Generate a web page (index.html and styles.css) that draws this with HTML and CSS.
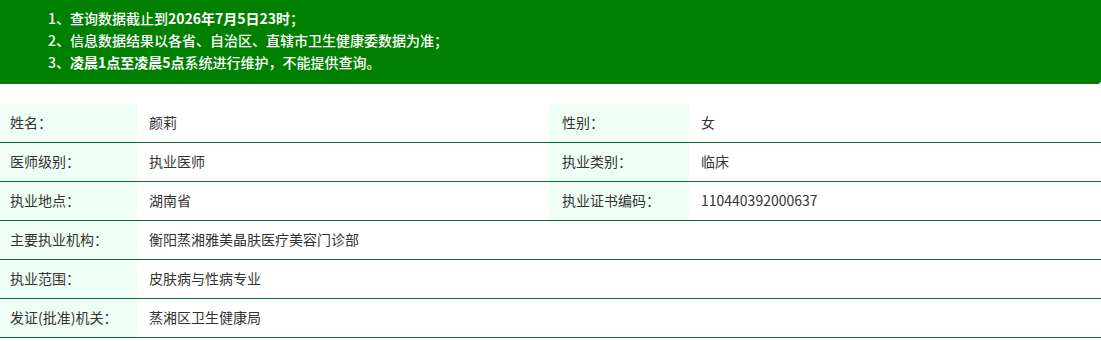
FILE: index.html
```html
<!DOCTYPE html>
<html lang="zh-CN">
<head>
<meta charset="utf-8">
<title>执业医师查询</title>
<link rel="stylesheet" href="styles.css">
</head>
<body>
<div class="notice">
  <p>1、查询数据截止到<b>2026年7月5日23时</b>；</p>
  <p>2、信息数据结果以各省、自治区、直辖市卫生健康委数据为准；</p>
  <p>3、<b>凌晨1点至凌晨5点</b>系统进行维护，不能提供查询。</p>
</div>
<div class="info">
  <div class="row">
    <div class="label first">姓名：</div><div class="value">颜莉</div>
    <div class="label">性别：</div><div class="value">女</div>
  </div>
  <div class="row">
    <div class="label first">医师级别：</div><div class="value">执业医师</div>
    <div class="label">执业类别：</div><div class="value">临床</div>
  </div>
  <div class="row">
    <div class="label first">执业地点：</div><div class="value">湖南省</div>
    <div class="label">执业证书编码：</div><div class="value">110440392000637</div>
  </div>
  <div class="row">
    <div class="label first">主要执业机构：</div><div class="value wide">衡阳蒸湘雅美晶肤医疗美容门诊部</div>
  </div>
  <div class="row">
    <div class="label first">执业范围：</div><div class="value wide">皮肤病与性病专业</div>
  </div>
  <div class="row">
    <div class="label first">发证(批准)机关：</div><div class="value wide">蒸湘区卫生健康局</div>
  </div>
</div>
</body>
</html>
```

FILE: styles.css
```css
html, body {
  margin: 0;
  padding: 0;
  background: #ffffff;
}
body {
  font-family: "Noto Sans CJK SC", "Noto Sans", sans-serif;
  font-size: 14px;
  color: #333333;
}
.notice {
  background: #008000;
  color: #ffffff;
  padding: 7px 0 11px 48px;
  height: 66px;
  border-bottom-right-radius: 4px;
  font-size: 14px;
  line-height: 22px;
  font-weight: 500;
}
.notice p {
  margin: 0;
}
.notice b {
  font-weight: 700;
}
.info {
  margin-top: 20px;
}
.row {
  display: grid;
  grid-template-columns: 137px 412px 140px 1fr;
  border-bottom: 1px solid #0b6a35;
  height: 38px;
}
.label, .value {
  display: flex;
  align-items: center;
  padding-left: 13px;
  padding-bottom: 3px;
  line-height: 20px;
}
.label {
  background: #effff6;
}
.label.first {
  padding-left: 10px;
}
.value {
  padding-left: 12px;
}
.value.wide {
  grid-column: 2 / 5;
}
```
